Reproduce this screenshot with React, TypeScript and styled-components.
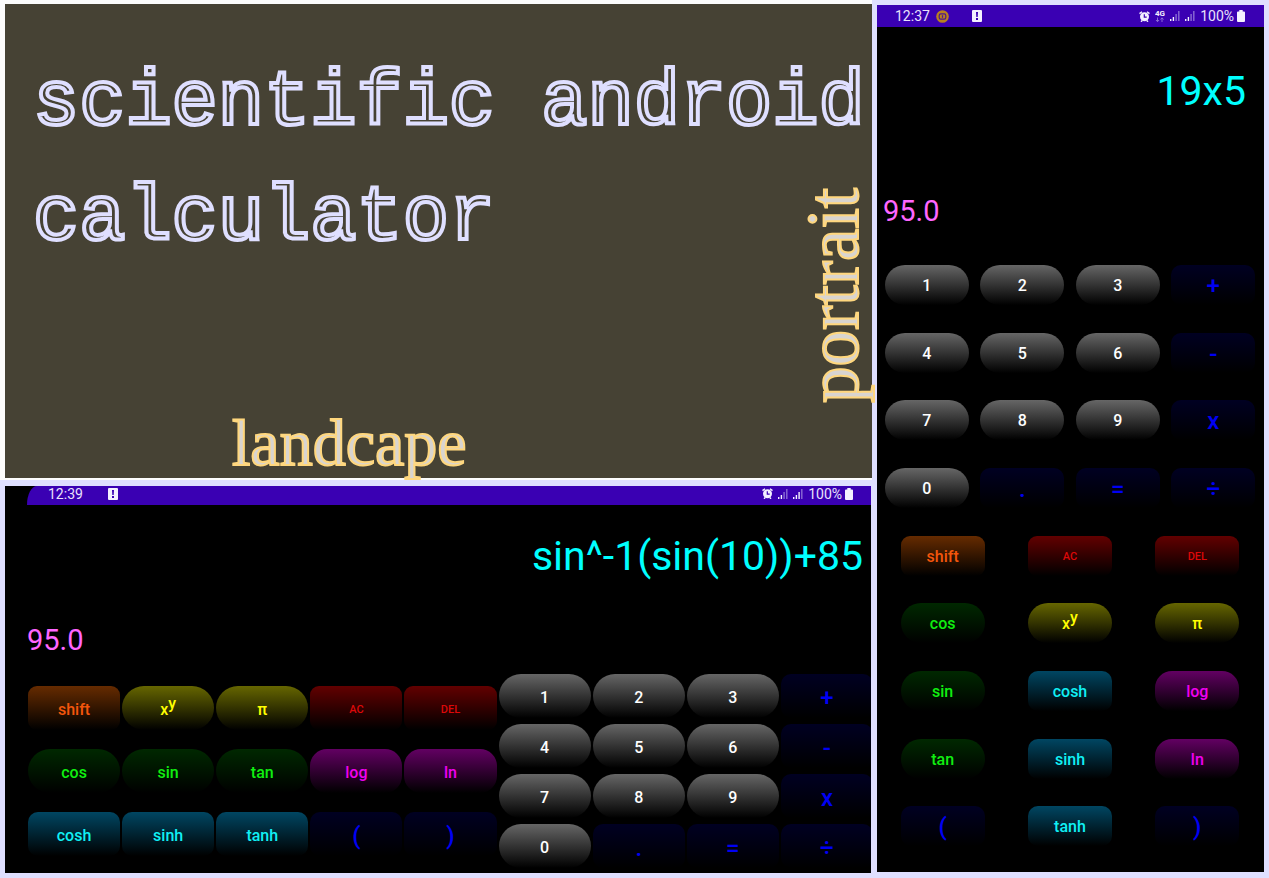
import React from "react";
import styled, { createGlobalStyle } from "styled-components";

const GlobalStyle = createGlobalStyle`
  *, *::before, *::after { box-sizing: border-box; }
  body { margin: 0; background: #dfdfff; font-family: Roboto, sans-serif; }
`;

const tones = {
  digit: { top: "#666666", text: "#ffffff", radius: 22 },
  operator: { top: "#000022", text: "#0000f4", radius: 10 },
  shift: { top: "#662b00", text: "#f4560c", radius: 9 },
  danger: { top: "#620000", text: "#dc0808", radius: 9 },
  trig: { top: "#002800", text: "#10ee10", radius: 22 },
  power: { top: "#666600", text: "#ffff00", radius: 22 },
  hyper: { top: "#004662", text: "#10f0f4", radius: 10 },
  log: { top: "#620062", text: "#f000f0", radius: 17 },
};

type Tone = keyof typeof tones;
type KeyDef = { label: React.ReactNode; name?: string; tone: Tone; size?: "small" | "large" };

const Page = styled.main`
  display: grid;
  grid-template-columns: minmax(0, 872fr) minmax(0, 397fr);
  min-height: 100vh;
`;

const LeftColumn = styled.div`
  display: flex;
  flex-direction: column;
`;

const HeroFrame = styled.header`
  padding: 4px 0 2px 5px;
  background: #fcfcfc;
`;

const Hero = styled.div`
  display: grid;
  min-height: 474px;
  background: #464234;

  > * { grid-area: 1 / 1; margin: 0; }
`;

const Title = styled.h1`
  padding: 42px 0 0 28px;
  font: 400 77px/115px "Liberation Mono", monospace;
  color: #464234;
  -webkit-text-stroke: 4px #dfdfff;
`;

const Caption = styled.h2`
  z-index: 1;
  color: #d8d4d0;
  -webkit-text-stroke: 2px #ffd77e;
  font-family: "Liberation Serif", serif;
  font-weight: 400;
`;

const LandscapeCaption = styled(Caption)`
  place-self: end start;
  padding: 0 0 5px 227px;
  font-size: 66px;
  line-height: 60px;
`;

const PortraitCaption = styled(Caption)`
  place-self: start end;
  padding: 0 0 184px 6px;
  font-size: 73px;
  line-height: 64px;
  writing-mode: vertical-rl;
  transform: rotate(180deg);
`;

const LandscapeFrame = styled.section`
  flex: 1;
  display: flex;
  padding: 6px 1px 5px 5px;
`;

const LandscapeScreen = styled.div`
  flex: 1;
  padding-left: 22px;
  background: #000;
  overflow: hidden;
`;

const PortraitFrame = styled.section`
  display: flex;
  padding: 5px 5px 6px;
`;

const PortraitScreen = styled.div`
  flex: 1;
  display: flex;
  flex-direction: column;
  background: #000;
`;

const StatusBar = styled.div<{ $landscape?: boolean }>`
  display: flex;
  align-items: center;
  justify-content: space-between;
  height: ${(p) => (p.$landscape ? 19 : 22)}px;
  padding: ${(p) => (p.$landscape ? "0 18px 4px 21px" : "0 19px 0 18px")};
  border-top-left-radius: ${(p) => (p.$landscape ? "10px 19px" : "0")};
  background: #3a00b3;
  color: #e9e2fb;
  font-size: 14px;
  line-height: 16px;
`;

const StatusGroup = styled.div<{ $gap: number }>`
  display: flex;
  align-items: center;
  gap: ${(p) => p.$gap}px;
`;

const Output = styled.output<{ $kind: "expression" | "result"; $top: number; $side: number }>`
  display: block;
  padding-top: ${(p) => p.$top}px;
  padding-left: ${(p) => (p.$kind === "result" ? p.$side : 0)}px;
  padding-right: ${(p) => (p.$kind === "result" ? 0 : p.$side)}px;
  text-align: ${(p) => (p.$kind === "result" ? "left" : "right")};
  color: ${(p) => (p.$kind === "result" ? "#ff66ff" : "#00ffff")};
  font-size: ${(p) => (p.$kind === "result" ? 29 : 41)}px;
  line-height: ${(p) => (p.$kind === "result" ? 34 : 50)}px;
`;

const Key = styled.button<{ $tone: Tone; $size?: "small" | "large" }>`
  display: flex;
  align-items: center;
  justify-content: center;
  padding: 2px 0 0;
  border: 0;
  border-radius: ${(p) => tones[p.$tone].radius}px;
  background: linear-gradient(${(p) => tones[p.$tone].top}, #000);
  color: ${(p) => tones[p.$tone].text};
  font-family: inherit;
  font-weight: 500;
  font-size: ${(p) => (p.$size === "small" ? 11 : p.$size === "large" ? 24 : 16)}px;
  line-height: 24px;
  cursor: pointer;
`;

const Raised = styled.sup`
  padding-bottom: 12px;
  font-size: 16px;
  line-height: 16px;
`;

const LandscapePads = styled.div`
  display: grid;
  grid-template-columns: 5fr 4fr;
  margin-right: -3px;
  padding-top: 17px;
`;

const LandscapePad = styled.div<{ $columns: number; $gap: number; $top: number }>`
  display: grid;
  grid-template-columns: repeat(${(p) => p.$columns}, 1fr);
  grid-auto-rows: 44px;
  align-content: start;
  gap: ${(p) => p.$gap}px 2px;
  padding: ${(p) => p.$top}px 1px 0;

  ${Key} { padding-top: 4px; }
`;

const PortraitRows = styled.div`
  flex: 1;
  display: flex;
  flex-direction: column;
  padding: 23px 3px 12px 2px;
`;

const PortraitRow = styled.div`
  flex: 1;
  display: flex;
  align-items: center;
  justify-content: space-around;

  ${Key} { width: 84px; height: 40px; }
`;

const digit = (n: number): KeyDef => ({ label: n, tone: "digit" });
const op = (label: string, name: string): KeyDef => ({ label, name, tone: "operator", size: "large" });

const shift: KeyDef = { label: "shift", tone: "shift" };
const power: KeyDef = { label: <>x<Raised>y</Raised></>, name: "x to the power y", tone: "power" };
const pi: KeyDef = { label: "π", tone: "power" };
const clear: KeyDef = { label: "AC", tone: "danger", size: "small" };
const del: KeyDef = { label: "DEL", tone: "danger", size: "small" };
const open = op("(", "open parenthesis");
const close = op(")", "close parenthesis");
const fn = (label: string, tone: Tone): KeyDef => ({ label, tone });

const numberRows: KeyDef[][] = [
  [digit(1), digit(2), digit(3), op("+", "plus")],
  [digit(4), digit(5), digit(6), op("-", "minus")],
  [digit(7), digit(8), digit(9), op("x", "times")],
  [digit(0), op(".", "decimal point"), op("=", "equals"), op("÷", "divide")],
];

const landscapeFunctions: KeyDef[] = [
  shift, power, pi, clear, del,
  fn("cos", "trig"), fn("sin", "trig"), fn("tan", "trig"), fn("log", "log"), fn("ln", "log"),
  fn("cosh", "hyper"), fn("sinh", "hyper"), fn("tanh", "hyper"), open, close,
];

const portraitRows: KeyDef[][] = [
  ...numberRows,
  [shift, clear, del],
  [fn("cos", "trig"), power, pi],
  [fn("sin", "trig"), fn("cosh", "hyper"), fn("log", "log")],
  [fn("tan", "trig"), fn("sinh", "hyper"), fn("ln", "log")],
  [open, fn("tanh", "hyper"), close],
];

const renderKey = (k: KeyDef, i: number) => (
  <Key key={i} type="button" aria-label={k.name} $tone={k.tone} $size={k.size}>
    {k.label}
  </Key>
);

const NoticeIcon = () => (
  <svg width="10" height="12" viewBox="0 0 10 12" aria-hidden="true">
    <rect width="10" height="12" rx="1" fill="#f4f0ff" />
    <path d="M4 2h2L5.7 7H4.3zM4 8h2v2H4z" fill="#3a00b3" />
  </svg>
);

const CoinIcon = () => (
  <svg width="13" height="13" viewBox="0 0 13 13" aria-hidden="true">
    <circle cx="6.5" cy="6.5" r="6.3" fill="#b9801f" />
    <rect x="3.2" y="3.8" width="6.6" height="5.4" rx="1.6" fill="none" stroke="#4c1690" strokeWidth="1.2" />
    <path d="M6.5 5.2v2.6" stroke="#4c1690" strokeWidth="1.2" />
  </svg>
);

const AlarmIcon = () => (
  <svg width="11" height="11" viewBox="0 0 11 11" aria-hidden="true">
    <circle cx="5.5" cy="5.8" r="4.5" fill="#f4f0ff" />
    <path d="M.5 2.6 3 .7M8 .7l2.5 1.9M2 10.8l1.2-1.3M9 10.8 7.8 9.5" stroke="#f4f0ff" strokeWidth="1.4" />
    <path d="M5.3 3.2v2.9h2.4" fill="none" stroke="#3a00b3" strokeWidth="1.2" />
  </svg>
);

const NetworkIcon = () => (
  <svg width="10" height="13" viewBox="0 0 10 13" aria-hidden="true">
    <text x="0" y="6" fill="#f4f0ff" fontFamily="Roboto, sans-serif" fontSize="8" fontWeight="700">4G</text>
    <path d="M2.5 7.5v4M1 10l1.5 1.7L4 10M7 12V8M5.5 9.5 7 7.8l1.5 1.7" fill="none" stroke="#9274d8" strokeWidth=".9" />
  </svg>
);

const SignalIcon = ({ level }: { level: number }) => (
  <svg width="10" height="10" viewBox="0 0 10 10" aria-hidden="true">
    {[2, 4, 7, 10].map((h, i) => (
      <rect key={h} x={i * 2.7} y={10 - h} width="1.4" height={h} fill={i < level ? "#f4f0ff" : "#8b6bd4"} />
    ))}
  </svg>
);

const BatteryIcon = () => (
  <svg width="8" height="12" viewBox="0 0 8 12" aria-hidden="true">
    <path d="M2.3 0h3.4v1.5H7a1 1 0 0 1 1 1V11a1 1 0 0 1-1 1H1a1 1 0 0 1-1-1V2.500a1 1 0 0 1 1-1h1.300z" fill="#f4f0ff" />
  </svg>
);

export default function App() {
  return (
    <>
      <GlobalStyle />
      <Page>
        <LeftColumn>
          <HeroFrame>
            <Hero>
              <Title>scientific android calculator</Title>
              <LandscapeCaption>landcape</LandscapeCaption>
              <PortraitCaption>portrait</PortraitCaption>
            </Hero>
          </HeroFrame>
          <LandscapeFrame aria-label="Landscape calculator">
            <LandscapeScreen>
              <StatusBar $landscape>
                <StatusGroup $gap={25}>
                  12:39
                  <NoticeIcon />
                </StatusGroup>
                <StatusGroup $gap={5}>
                  <AlarmIcon />
                  <SignalIcon level={2} />
                  <SignalIcon level={3} />
                  <StatusGroup $gap={3}>100%<BatteryIcon /></StatusGroup>
                </StatusGroup>
              </StatusBar>
              <Output $kind="expression" $top={26} $side={8}>sin^-1(sin(10))+85</Output>
              <Output $kind="result" $top={42} $side={0}>95.0</Output>
              <LandscapePads>
                <LandscapePad $columns={5} $gap={19} $top={12}>
                  {landscapeFunctions.map(renderKey)}
                </LandscapePad>
                <LandscapePad $columns={4} $gap={6} $top={0}>
                  {numberRows.flat().map(renderKey)}
                </LandscapePad>
              </LandscapePads>
            </LandscapeScreen>
          </LandscapeFrame>
        </LeftColumn>
        <PortraitFrame aria-label="Portrait calculator">
          <PortraitScreen>
            <StatusBar>
              <StatusGroup $gap={23}>
                <StatusGroup $gap={6}>12:37<CoinIcon /></StatusGroup>
                <NoticeIcon />
              </StatusGroup>
              <StatusGroup $gap={5}>
                <AlarmIcon />
                <NetworkIcon />
                <SignalIcon level={2} />
                <SignalIcon level={2} />
                <StatusGroup $gap={3}>100%<BatteryIcon /></StatusGroup>
              </StatusGroup>
            </StatusBar>
            <Output $kind="expression" $top={39} $side={18}>19x5</Output>
            <Output $kind="result" $top={78} $side={6}>95.0</Output>
            <PortraitRows>
              {portraitRows.map((row, i) => (
                <PortraitRow key={i}>{row.map(renderKey)}</PortraitRow>
              ))}
            </PortraitRows>
          </PortraitScreen>
        </PortraitFrame>
      </Page>
    </>
  );
}
